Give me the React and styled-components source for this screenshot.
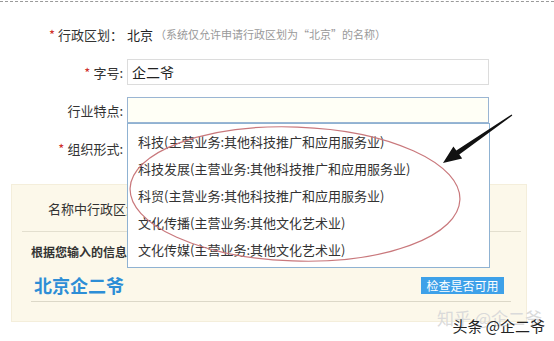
import styled, { createGlobalStyle } from "styled-components";

const GlobalStyle = createGlobalStyle`
  html, body {
    margin: 0;
    padding: 0;
    background: #ffffff;
  }
  body {
    font-family: "Noto Sans CJK SC", "Noto Sans", sans-serif;
    color: #333333;
  }
`;

const Page = styled.div`
  position: relative;
  width: 554px;
  height: 341px;
  overflow: hidden;
  background: #ffffff;
  padding-top: 1px;
  box-sizing: border-box;
`;

const DashedRule = styled.div`
  border-top: 1px dashed #9a9a9a;
`;

const Form = styled.div`
  display: flex;
  flex-direction: column;
  gap: 12px;
  padding-top: 19px;
`;

const Row = styled.div`
  display: flex;
  align-items: center;
  height: 26px;
`;

const Label = styled.div`
  width: 127px;
  padding-right: 4px;
  box-sizing: border-box;
  text-align: right;
  font-size: 13px;
  color: #333333;
  white-space: nowrap;
`;

const Star = styled.span`
  color: #d0302a;
  margin-right: 3px;
`;

const Value = styled.span`
  font-size: 13px;
  color: #222222;
`;

const Note = styled.span`
  font-size: 11px;
  color: #999999;
  margin-left: 2px;
`;

const Input = styled.div`
  width: 362px;
  height: 26px;
  box-sizing: border-box;
  border: 1px solid ${({ $focus }) => ($focus ? "#9ab5d3" : "#dcdcdc")};
  background: ${({ $focus }) => ($focus ? "#fffff6" : "#ffffff")};
  font-size: 14px;
  line-height: 24px;
  padding-left: 4px;
  color: #222222;
`;

const Panel = styled.div`
  margin: 23px 0 0 11px;
  width: 516px;
  height: 138px;
  box-sizing: border-box;
  background: #fcf8ea;
  border: 1px solid #f4eedb;
  padding: 0 5px 0 10px;
`;

const PanelHead = styled.div`
  height: 46px;
  display: flex;
  align-items: center;
  padding-left: 26px;
  font-size: 13px;
  color: #333333;
  border-bottom: 1px solid #e3dfcf;
`;

const Info = styled.div`
  padding: 11px 0 0 9px;
  font-size: 12px;
  font-weight: bold;
  color: #333333;
`;

const NameRow = styled.div`
  display: flex;
  align-items: center;
  justify-content: space-between;
  margin: 11px 0 0 9px;
  width: 480px;
  height: 28px;
  border-bottom: 1px solid #dcd8c8;
  padding-bottom: 2px;
`;

const Name = styled.div`
  font-size: 18px;
  font-weight: bold;
  color: #2d8ed6;
  padding-left: 3px;
`;

const CheckButton = styled.div`
  width: 83px;
  height: 17px;
  background: #3ea1e9;
  color: #ffffff;
  font-size: 12px;
  line-height: 17px;
  text-align: center;
  margin-right: 7px;
`;

const Dropdown = styled.ul`
  position: absolute;
  left: 127px;
  top: 123px;
  width: 363px;
  height: 145px;
  box-sizing: border-box;
  margin: 0;
  padding: 4px 0 0 0;
  list-style: none;
  background: #ffffff;
  border: 1px solid #8fb2d2;
`;

const Option = styled.li`
  height: 27px;
  line-height: 27px;
  padding-left: 10px;
  font-size: 13px;
  color: #333333;
  white-space: nowrap;
`;

const Overlay = styled.svg`
  position: absolute;
  left: 0;
  top: 0;
  pointer-events: none;
`;

const Watermark = styled.div`
  position: absolute;
  right: ${({ $right }) => $right}px;
  top: ${({ $top }) => $top}px;
  font-size: ${({ $faint }) => ($faint ? 17 : 15)}px;
  color: ${({ $faint }) => ($faint ? "#dadada" : "#222222")};
  white-space: nowrap;
`;

const options = [
  "科技(主营业务:其他科技推广和应用服务业)",
  "科技发展(主营业务:其他科技推广和应用服务业)",
  "科贸(主营业务:其他科技推广和应用服务业)",
  "文化传播(主营业务:其他文化艺术业)",
  "文化传媒(主营业务:其他文化艺术业)",
];

const App = () => {
  return (
    <Page>
      <GlobalStyle />
      <DashedRule />
      <Form>
        <Row>
          <Label>
            <Star>*</Star>行政区划：
          </Label>
          <Value>北京</Value>
          <Note>（系统仅允许申请行政区划为“北京”的名称）</Note>
        </Row>
        <Row>
          <Label>
            <Star>*</Star>字号:
          </Label>
          <Input>企二爷</Input>
        </Row>
        <Row>
          <Label>行业特点:</Label>
          <Input $focus />
        </Row>
        <Row>
          <Label>
            <Star>*</Star>组织形式:
          </Label>
        </Row>
      </Form>

      <Panel>
        <PanelHead>名称中行政区划位置：</PanelHead>
        <Info>根据您输入的信息，系统为您组合的名称如下：</Info>
        <NameRow>
          <Name>北京企二爷</Name>
          <CheckButton>检查是否可用</CheckButton>
        </NameRow>
      </Panel>

      <Dropdown>
        {options.map((o) => (
          <Option key={o}>{o}</Option>
        ))}
      </Dropdown>

      <Overlay width="554" height="341" viewBox="0 0 554 341">
        <ellipse
          cx="295"
          cy="194"
          rx="165"
          ry="67"
          transform="rotate(2 295 194)"
          fill="none"
          stroke="#c9787c"
          strokeWidth="1.2"
        />
        <polygon
          points="512.3,115.6 459.3,154.6 462.2,158.6 443,163 453.4,146.6 456.3,150.6 511.7,114.4"
          fill="#111111"
        />
      </Overlay>

      <Watermark $faint $right={12} $top={305}>
        知乎 @企二爷
      </Watermark>
      <Watermark $right={9} $top={315}>
        头条 @企二爷
      </Watermark>
    </Page>
  );
};

export default App;
